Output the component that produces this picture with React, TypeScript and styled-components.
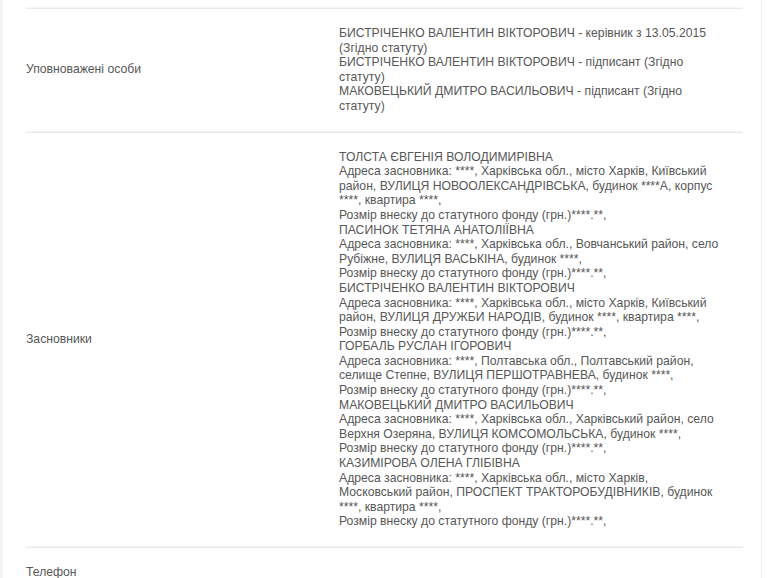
import React from 'react'
import styled, { createGlobalStyle } from 'styled-components'

const GlobalStyle = createGlobalStyle`
  html, body {
    margin: 0;
    padding: 0;
    background: #ffffff;
  }
  body {
    font-family: 'Liberation Sans', Arial, sans-serif;
    overflow: hidden;
  }
`

const Page = styled.div`
  width: 762px;
  height: 578px;
  overflow: hidden;
  border-left: 3px solid #f4f4f4;
  border-right: 1px solid #eeeeee;
  padding: 8px 0 0 23px;
  box-sizing: border-box;
`

const Table = styled.div`
  width: 717px;
`

const Row = styled.div`
  display: grid;
  grid-template-columns: 313px 380px;
  align-items: center;
  border-top: 1px solid #e9e9e9;
  box-shadow: 0 -1px 0 #f6f6f6;
  padding: 17px 0 18px;
`

const Label = styled.div`
  font-size: 12.2px;
  line-height: 14.6px;
  color: #575757;
`

const Value = styled.div`
  font-size: 12.2px;
  line-height: 14.6px;
  color: #575757;
`

const Line = styled.div``

type Founder = {
  name: string
  address: string
}

const persons = [
  'БИСТРІЧЕНКО ВАЛЕНТИН ВІКТОРОВИЧ - керівник з 13.05.2015 (Згідно статуту)',
  'БИСТРІЧЕНКО ВАЛЕНТИН ВІКТОРОВИЧ - підписант (Згідно статуту)',
  'МАКОВЕЦЬКИЙ ДМИТРО ВАСИЛЬОВИЧ - підписант (Згідно статуту)',
]

const founders: Founder[] = [
  {
    name: 'ТОЛСТА ЄВГЕНІЯ ВОЛОДИМИРІВНА',
    address:
      'Адреса засновника: ****, Харківська обл., місто Харків, Київський район, ВУЛИЦЯ НОВООЛЕКСАНДРІВСЬКА, будинок ****А, корпус ****, квартира ****,',
  },
  {
    name: 'ПАСИНОК ТЕТЯНА АНАТОЛІЇВНА',
    address:
      'Адреса засновника: ****, Харківська обл., Вовчанський район, село Рубіжне, ВУЛИЦЯ ВАСЬКІНА, будинок ****,',
  },
  {
    name: 'БИСТРІЧЕНКО ВАЛЕНТИН ВІКТОРОВИЧ',
    address:
      'Адреса засновника: ****, Харківська обл., місто Харків, Київський район, ВУЛИЦЯ ДРУЖБИ НАРОДІВ, будинок ****, квартира ****,',
  },
  {
    name: 'ГОРБАЛЬ РУСЛАН ІГОРОВИЧ',
    address:
      'Адреса засновника: ****, Полтавська обл., Полтавський район, селище Степне, ВУЛИЦЯ ПЕРШОТРАВНЕВА, будинок ****,',
  },
  {
    name: 'МАКОВЕЦЬКИЙ ДМИТРО ВАСИЛЬОВИЧ',
    address:
      'Адреса засновника: ****, Харківська обл., Харківський район, село Верхня Озеряна, ВУЛИЦЯ КОМСОМОЛЬСЬКА, будинок ****,',
  },
  {
    name: 'КАЗИМІРОВА ОЛЕНА ГЛІБІВНА',
    address:
      'Адреса засновника: ****, Харківська обл., місто Харків, Московський район, ПРОСПЕКТ ТРАКТОРОБУДІВНИКІВ, будинок ****, квартира ****,',
  },
]

const App: React.FC = () => {
  return (
    <>
      <GlobalStyle />
      <Page>
        <Table>
          <Row>
            <Label>Уповноважені особи</Label>
            <Value>
              {persons.map((p, i) => (
                <Line key={i}>{p}</Line>
              ))}
            </Value>
          </Row>
          <Row>
            <Label>Засновники</Label>
            <Value>
              {founders.map((f, i) => (
                <React.Fragment key={i}>
                  <Line>{f.name}</Line>
                  <Line>{f.address}</Line>
                  <Line>Розмір внеску до статутного фонду (грн.)****.**,</Line>
                </React.Fragment>
              ))}
            </Value>
          </Row>
          <Row>
            <Label>Телефон</Label>
            <Value />
          </Row>
        </Table>
      </Page>
    </>
  )
}

export default App
